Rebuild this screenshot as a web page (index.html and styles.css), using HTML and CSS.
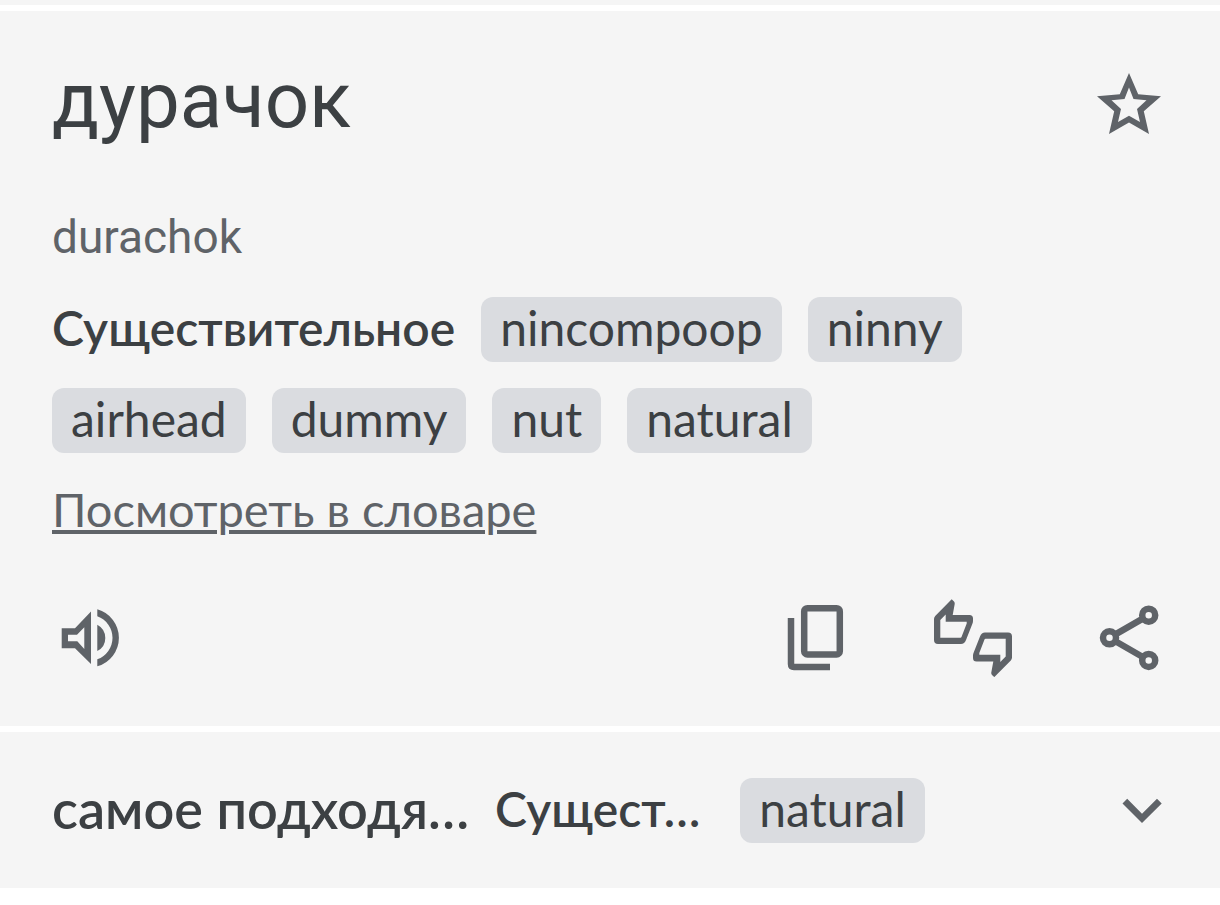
FILE: index.html
```html
<!DOCTYPE html>
<html lang="ru">
<head>
<meta charset="utf-8">
<meta name="viewport" content="width=device-width, initial-scale=1">
<title>дурачок</title>
<link rel="stylesheet" href="styles.css">
</head>
<body>
<div class="previous"></div>
<main class="results">
  <article class="card">
    <header class="card-head">
      <h1 class="word" lang="ru">дурачок</h1>
      <button class="icon-button star" type="button" aria-label="Сохранить">
        <svg class="icon" viewBox="0 0 78 78" aria-hidden="true"><path fill-rule="evenodd" d="M39 7L48.200 28.200L71 30.200L53.800 45.300L59 68L39 56.500L19 68L24.200 45.300L7 30.200L29.800 28.200zM39 21.500L34.500 33L21.500 34.200L31 43L28 56L39 49.700L50 56L47 43L56.500 34.200L43.500 33z"/></svg>
      </button>
    </header>
    <p class="translit">durachok</p>
    <div class="meanings">
      <h2 class="pos">Существительное</h2>
      <button class="chip" type="button">nincompoop</button>
      <button class="chip" type="button">ninny</button>
      <button class="chip" type="button">airhead</button>
      <button class="chip" type="button">dummy</button>
      <button class="chip" type="button">nut</button>
      <button class="chip" type="button">natural</button>
    </div>
    <a class="dictionary" href="#dictionary">Посмотреть в словаре</a>
    <div class="actions">
      <button class="icon-button listen" type="button" aria-label="Прослушать">
        <svg class="icon" viewBox="0 0 78 78" aria-hidden="true"><path fill-rule="evenodd" d="M9.7 29.3H23L39 12.500V65L23 49.3H9.7zM16 35.7V42.3H25.3L32.3 50V28.3L25 35.7z"/><path d="M45.3 25.7Q53.3 30 53.3 39T45.3 52zM45.3 10.3A29.6 29.6 0 0 1 45.3 67.3V60.3A22.8 22.8 0 0 0 45.3 17.3z"/></svg>
      </button>
      <button class="icon-button" type="button" aria-label="Копировать">
        <svg class="icon line" viewBox="0 0 78 78" aria-hidden="true"><rect x="26.2" y="9.2" width="35.6" height="46.2" rx="3.2"/><path d="M13 19V65Q13 68 16 68H52"/></svg>
      </button>
      <button class="icon-button" type="button" aria-label="Оценить перевод">
        <svg class="icon" viewBox="0 0 78 78" aria-hidden="true"><defs><path id="thumb" fill-rule="evenodd" d="M0 20Q0 18.300 1.200 17L17.700 .3L20 2.500Q21 3.500 20.700 5L18.700 16H35.500Q39 16 39 19.500V22Q39 23.500 38.300 25L32 41Q30.500 45 27 45H4Q0 45 0 41zM6.300 21V38.700H26.500Q27.200 38.700 27.500 38L32.700 24.500V22.700H11.700V15.500z"/></defs><use href="#thumb"/><use href="#thumb" transform="rotate(180 39 39.200)"/></svg>
      </button>
      <button class="icon-button" type="button" aria-label="Поделиться">
        <svg class="icon line" viewBox="0 0 78 78" aria-hidden="true"><circle cx="19.500" cy="38.800" r="6.500"/><circle cx="58.700" cy="16.200" r="6.500"/><circle cx="58.700" cy="61.400" r="6.500"/><path d="M25 35.600L53.200 19.400M25 42L53.200 58.200"/></svg>
      </button>
    </div>
  </article>
  <article class="card compact">
    <h2 class="headword">самое подходя…</h2>
    <p class="pos short">Сущест…</p>
    <button class="chip" type="button">natural</button>
    <button class="icon-button expand" type="button" aria-label="Развернуть" aria-expanded="false">
      <svg class="icon" viewBox="0 0 78 78" aria-hidden="true"><path d="M19.500 32.500L24.200 27.800L39 42.700L54 27.800L58.700 32.500L39 52z"/></svg>
    </button>
  </article>
</main>
</body>
</html>
```
FILE: styles.css
```css
* {
  box-sizing: border-box;
}

body {
  margin: 0;
  background: #fff;
  color: #3c4043;
  font: 400 48px/61px Lato, "Noto Sans", sans-serif;
}

h1,
h2,
p {
  margin: 0;
}

button {
  margin: 0;
  border: 0;
  color: inherit;
  font: inherit;
  cursor: pointer;
}

.previous {
  height: 5px;
  margin-bottom: 6px;
  background: #f5f5f5;
}

.results {
  display: flex;
  flex-direction: column;
  gap: 6px;
}

.card {
  padding: 44px 52px 49px;
  background: #f5f5f5;
}

.card-head {
  display: flex;
  align-items: flex-start;
  justify-content: space-between;
}

.word {
  font: 400 78px/92px Roboto, sans-serif;
}

.icon-button {
  flex: none;
  width: 78px;
  height: 78px;
  padding: 0;
  background: none;
  color: #5f6368;
}

.icon {
  display: block;
  width: 100%;
  height: 100%;
  fill: currentColor;
}

.line {
  fill: none;
  stroke: currentColor;
  stroke-width: 6.5;
}

.star {
  margin-top: 11px;
}

.translit {
  margin-top: 63px;
  color: #5f6368;
  font: 400 46px/54px Roboto, sans-serif;
}

.meanings {
  display: flex;
  flex-wrap: wrap;
  gap: 26px;
  max-width: 1000px;
  margin-top: 33px;
}

.pos {
  padding-bottom: 4px;
  font-size: 48px;
  font-weight: 600;
}

.chip {
  padding: 0 19px 4px;
  border-radius: 12px;
  background: #dadce0;
}

.dictionary {
  display: inline-block;
  margin-top: 26px;
  padding-bottom: 4px;
  color: #5f6368;
  font-size: 47px;
  text-decoration-line: underline;
  text-decoration-thickness: 4px;
  text-underline-offset: 3px;
}

.actions {
  display: flex;
  gap: 78px;
  margin-top: 55px;
}

.listen {
  margin-right: auto;
}

.compact {
  display: flex;
  align-items: center;
  gap: 26px;
  padding: 39px 52px;
}

.headword {
  padding-bottom: 4px;
  font-size: 54px;
  font-weight: 600;
}

.short {
  margin-right: 14px;
}

.expand {
  margin-right: -13px;
  margin-left: auto;
}
```
